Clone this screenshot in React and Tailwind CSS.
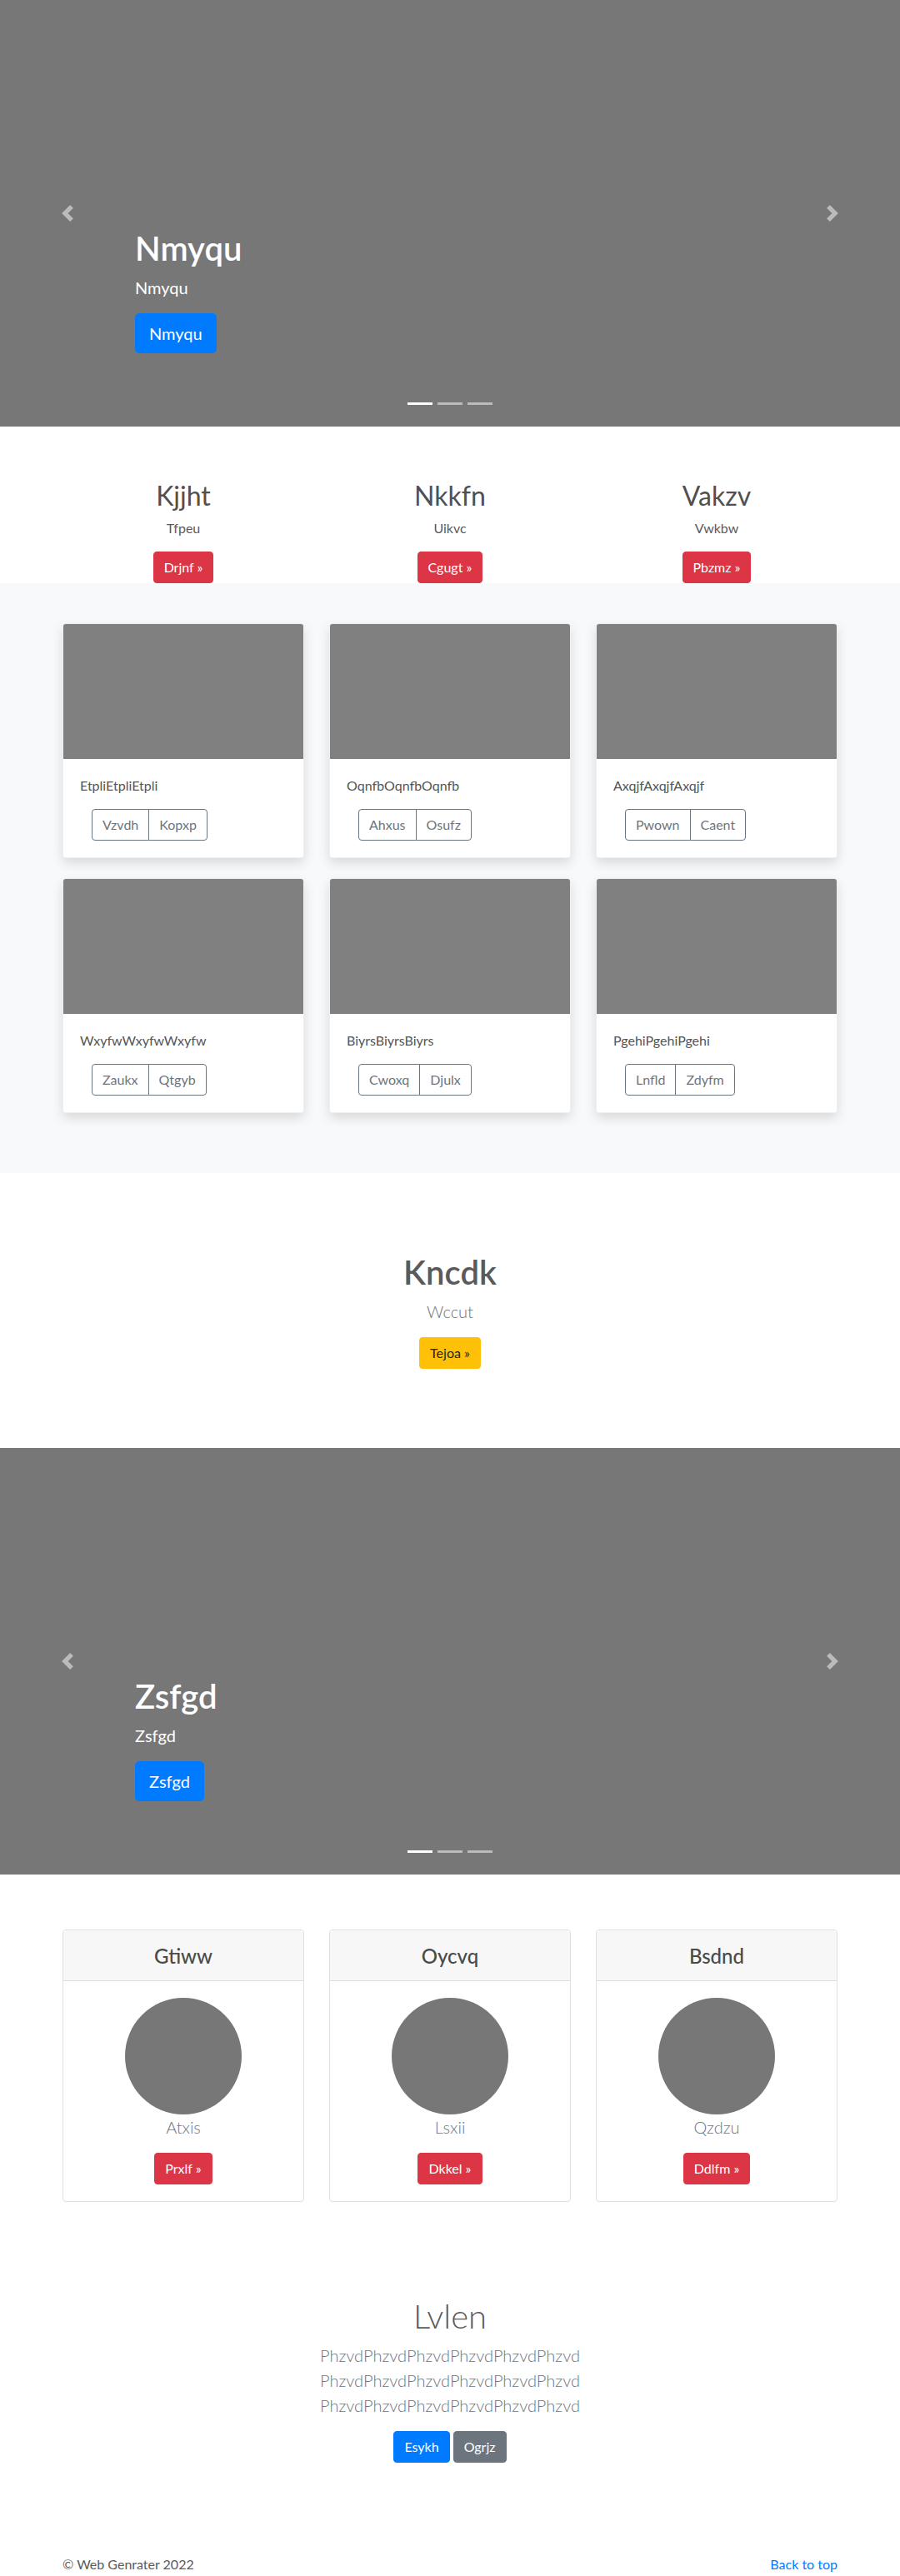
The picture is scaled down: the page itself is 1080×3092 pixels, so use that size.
import React from "react";

function Prev() {
  return (
    <svg width="20" height="20" viewBox="0 0 8 8" fill="#fff">
      <path d="M5.25 0l-4 4 4 4 1.5-1.5-2.5-2.5 2.5-2.5-1.5-1.5z" />
    </svg>
  );
}
function Next() {
  return (
    <svg width="20" height="20" viewBox="0 0 8 8" fill="#fff">
      <path d="M2.75 0l-1.5 1.5 2.5 2.5-2.5 2.5 1.5 1.5 4-4-4-4z" />
    </svg>
  );
}

function Carousel({ title }) {
  return (
    <div className="relative h-[512px] bg-[#777777] overflow-hidden">
      <div className="absolute left-0 top-0 bottom-0 w-[15%] flex items-center justify-center opacity-50">
        <Prev />
      </div>
      <div className="absolute right-0 top-0 bottom-0 w-[15%] flex items-center justify-center opacity-50">
        <Next />
      </div>
      <div className="absolute left-[15%] right-[15%] bottom-[48px] py-5 text-left text-white">
        <h1 className="text-[40px] leading-[48px] font-semibold mb-2">{title}</h1>
        <p className="text-[20px] leading-[30px] mb-4">{title}</p>
        <p className="mb-5">
          <span className="inline-block bg-[#007bff] border border-[#007bff] text-white text-[20px] leading-[30px] px-4 py-2 rounded-[5px]">
            {title}
          </span>
        </p>
      </div>
      <div className="absolute left-0 right-0 bottom-[26px] flex justify-center gap-[6px]">
        <span className="block w-[30px] h-[3px] bg-white" />
        <span className="block w-[30px] h-[3px] bg-white/50" />
        <span className="block w-[30px] h-[3px] bg-white/50" />
      </div>
    </div>
  );
}

function RedBtn({ children }) {
  return (
    <span className="inline-block bg-[#dc3545] border border-[#dc3545] text-white text-base leading-6 px-3 py-[6px] rounded">
      {children}
    </span>
  );
}

const marketing = [
  ["Kjjht", "Tfpeu", "Drjnf »"],
  ["Nkkfn", "Uikvc", "Cgugt »"],
  ["Vakzv", "Vwkbw", "Pbzmz »"],
];

const album = [
  ["EtpliEtpliEtpli", "Vzvdh", "Kopxp"],
  ["OqnfbOqnfbOqnfb", "Ahxus", "Osufz"],
  ["AxqjfAxqjfAxqjf", "Pwown", "Caent"],
  ["WxyfwWxyfwWxyfw", "Zaukx", "Qtgyb"],
  ["BiyrsBiyrsBiyrs", "Cwoxq", "Djulx"],
  ["PgehiPgehiPgehi", "Lnfld", "Zdyfm"],
];

const pricing = [
  ["Gtiww", "Atxis", "Prxlf »"],
  ["Oycvq", "Lsxii", "Dkkel »"],
  ["Bsdnd", "Qzdzu", "Ddlfm »"],
];

export default function App() {
  return (
    <div className="font-[Lato,'Liberation_Sans',sans-serif] text-[#5a5a5a] bg-white">
      <Carousel title="Nmyqu" />

      <div className="w-[960px] mx-auto px-[15px] pt-16">
        <div className="grid grid-cols-3 gap-x-[30px]">
          {marketing.map(([h, p, b]) => (
            <div key={h} className="text-center">
              <h2 className="text-[32px] leading-[38px] font-normal text-[#505050] mb-2">{h}</h2>
              <p className="text-base leading-6 mb-4">{p}</p>
              <p>
                <RedBtn>{b}</RedBtn>
              </p>
            </div>
          ))}
        </div>
      </div>

      <div className="bg-[#f8f9fa] py-12">
        <div className="w-[960px] mx-auto px-[15px]">
          <div className="grid grid-cols-3 gap-x-[30px]">
            {album.map(([t, a, b]) => (
              <div
                key={t}
                className="mb-6 bg-white rounded border border-black/[.06] overflow-hidden shadow-[0_6px_14px_rgba(0,0,0,0.13)]"
              >
                <div className="h-[162px] bg-[#808080]" />
                <div className="p-5">
                  <p className="text-base leading-6 mb-4 text-[#555]">{t}</p>
                  <div className="ml-[14px] inline-flex">
                    <span className="border border-[#6c757d] text-[#6c757d] text-base leading-6 px-3 py-[6px] rounded-l">
                      {a}
                    </span>
                    <span className="-ml-px border border-[#6c757d] text-[#6c757d] text-base leading-6 px-3 py-[6px] rounded-r">
                      {b}
                    </span>
                  </div>
                </div>
              </div>
            ))}
          </div>
        </div>
      </div>

      <div className="py-[95px] text-center">
        <h1 className="text-[40px] leading-[48px] font-semibold mb-2">Kncdk</h1>
        <p className="text-[20px] leading-[30px] font-light text-[#6c757d] mb-4">Wccut</p>
        <p>
          <span className="inline-block bg-[#ffc107] border border-[#ffc107] text-[#212529] text-base leading-6 px-3 py-[6px] rounded">
            Tejoa »
          </span>
        </p>
      </div>

      <Carousel title="Zsfgd" />

      <div className="w-[960px] mx-auto px-[15px] pt-[66px]">
        <div className="grid grid-cols-3 gap-x-[30px]">
          {pricing.map(([h, p, b]) => (
            <div key={h} className="bg-white rounded border border-[#dfdfdf] overflow-hidden">
              <div className="h-[61px] bg-[#f7f7f7] border-b border-[#dfdfdf] flex items-center justify-center">
                <h4 className="text-[24px] leading-[29px] font-medium text-[#4a4a4a]">{h}</h4>
              </div>
              <div className="p-5 text-center">
                <div className="w-[140px] h-[140px] rounded-full bg-[#777777] mx-auto" />
                <p className="text-[20px] leading-[30px] font-light text-[#6c757d] mb-4">{p}</p>
                <p>
                  <RedBtn>{b}</RedBtn>
                </p>
              </div>
            </div>
          ))}
        </div>
      </div>

      <div className="pt-[113px] text-center">
        <h1 className="text-[40px] leading-[48px] font-light mb-2">Lvlen</h1>
        <p className="text-[20px] leading-[30px] font-light text-[#6c757d] mb-4">
          PhzvdPhzvdPhzvdPhzvdPhzvdPhzvd
          <br />
          PhzvdPhzvdPhzvdPhzvdPhzvdPhzvd
          <br />
          PhzvdPhzvdPhzvdPhzvdPhzvdPhzvd
        </p>
        <div className="flex justify-center gap-1 my-2">
          <span className="inline-block bg-[#007bff] border border-[#007bff] text-white text-base leading-6 px-3 py-[6px] rounded">
            Esykh
          </span>
          <span className="inline-block bg-[#6c757d] border border-[#6c757d] text-white text-base leading-6 px-3 py-[6px] rounded">
            Ogrjz
          </span>
        </div>
      </div>

      <div className="w-[960px] mx-auto px-[15px] pt-[102px] pb-4">
        <div className="flex justify-between text-base leading-6">
          <span>© Web Genrater 2022</span>
          <span className="text-[#007bff]">Back to top</span>
        </div>
      </div>
    </div>
  );
}
